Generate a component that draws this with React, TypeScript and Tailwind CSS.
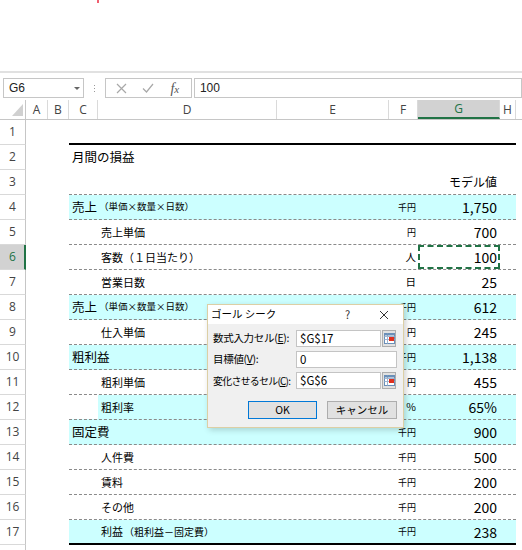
import React from 'react';

type Row = {
  n: number;
  fill?: 'C' | 'D';
  main?: string;
  mainSub?: string;
  indent?: string;
  indentSub?: string;
  unit?: string;
  unitBig?: boolean;
  val?: string;
  head?: string;
  border?: 'dash' | 'blackB' | 'none';
  title?: string;
  sel?: boolean;
  hideNum?: boolean;
};

const rows: Row[] = [
  { n: 1, border: 'blackB' },
  { n: 2, title: '月間の損益', border: 'none' },
  { n: 3, head: 'モデル値', border: 'dash' },
  { n: 4, fill: 'C', main: '売上', mainSub: '（単価×数量×日数）', unit: '千円', val: '1,750', border: 'dash' },
  { n: 5, indent: '売上単価', unit: '円', val: '700', border: 'dash' },
  { n: 6, indent: '客数（１日当たり）', unit: '人', unitBig: true, val: '100', border: 'dash', sel: true },
  { n: 7, indent: '営業日数', unit: '日', unitBig: true, val: '25', border: 'dash' },
  { n: 8, fill: 'C', main: '売上', mainSub: '（単価×数量×日数）', unit: '千円', val: '612', border: 'dash' },
  { n: 9, indent: '仕入単価', unit: '円', val: '245', border: 'dash' },
  { n: 10, fill: 'C', main: '粗利益', unit: '千円', val: '1,138', border: 'dash' },
  { n: 11, indent: '粗利単価', unit: '円', val: '455', border: 'dash' },
  { n: 12, fill: 'D', indent: '粗利率', unit: '%', unitBig: true, val: '65%', border: 'dash' },
  { n: 13, fill: 'C', main: '固定費', unit: '千円', val: '900', border: 'dash' },
  { n: 14, indent: '人件費', unit: '千円', val: '500', border: 'dash' },
  { n: 15, indent: '賃料', unit: '千円', val: '200', border: 'dash' },
  { n: 16, indent: 'その他', unit: '千円', val: '200', border: 'dash' },
  { n: 17, fill: 'C', indent: '利益', indentSub: '（粗利益－固定費）', unit: '千円', val: '238', border: 'blackB' },
  { n: 18, border: 'none', hideNum: true },
];

const cols = [
  { l: 'A', w: 'w-[22px]' },
  { l: 'B', w: 'w-[21px]' },
  { l: 'C', w: 'w-[29px]' },
  { l: 'D', w: 'w-[179px]' },
  { l: 'E', w: 'w-[112px]' },
  { l: 'F', w: 'w-[29px]' },
  { l: 'G', w: 'w-[82px]' },
  { l: 'H', w: 'w-[16px]' },
];

const JP = "font-['Noto_Sans_CJK_JP',sans-serif]";
const UI = "font-['Open_Sans','Liberation_Sans',sans-serif]";

function Picker() {
  return (
    <div className="w-[14px] h-[17px] ml-[1px] box-border border border-[#adadad] bg-[#e1e1e1] flex items-center justify-center">
      <svg width="11" height="11" viewBox="0 0 11 11">
        <rect x="0.5" y="0.5" width="10" height="10" fill="#ffffff" stroke="#6b8fb8" />
        <line x1="0.5" y1="3.5" x2="10.5" y2="3.5" stroke="#9fb6d2" />
        <line x1="0.5" y1="6.5" x2="10.5" y2="6.5" stroke="#9fb6d2" />
        <line x1="3.5" y1="0.5" x2="3.5" y2="10.5" stroke="#9fb6d2" />
        <rect x="0.5" y="0.5" width="10" height="2" fill="#6b8fb8" />
        <rect x="5" y="4" width="5" height="4" fill="#e0301e" />
      </svg>
    </div>
  );
}

function Dialog() {
  return (
    <div className={`absolute left-[207px] top-[304px] w-[197px] h-[124px] box-border border border-[#dccfa5] bg-[#f0f0f0] shadow-[2px_2px_6px_rgba(0,0,0,0.18)] ${JP} text-[11px] text-black leading-none`}>
      <div className="h-[19px] bg-white flex items-center relative">
        <span className="pl-[3px] text-[10.5px]">ゴール シーク</span>
        <span className="absolute left-[137px] top-[4px] text-[11px] text-[#333]">?</span>
        <svg className="absolute left-[171px] top-[5px]" width="10" height="10" viewBox="0 0 10 10">
          <path d="M1 1 L9 9 M9 1 L1 9" stroke="#333" strokeWidth="1" />
        </svg>
      </div>
      <div className="flex flex-col pl-[5px] pt-[6px]">
        <div className="flex items-center h-[17px]">
          <span className="w-[83px] whitespace-nowrap text-[10.5px] tracking-[-0.3px]">数式入力セル(<span className="underline">E</span>):</span>
          <div className="w-[85px] h-[17px] box-border border border-[#c4c4c4] bg-white flex items-center pl-[3px] text-[11.5px]">$G$17</div>
          <Picker />
        </div>
        <div className="flex items-center h-[17px] mt-[4px]">
          <span className="w-[83px] whitespace-nowrap text-[10.5px] tracking-[-0.3px]">目標値(<span className="underline">V</span>):</span>
          <div className="w-[101px] h-[17px] box-border border border-[#c4c4c4] bg-white flex items-center pl-[3px] text-[11.5px]">0</div>
        </div>
        <div className="flex items-center h-[17px] mt-[4px]">
          <span className="w-[83px] whitespace-nowrap text-[10px] tracking-[-0.8px]">変化させるセル(<span className="underline">C</span>):</span>
          <div className="w-[85px] h-[17px] box-border border border-[#c4c4c4] bg-white flex items-center pl-[3px] text-[11.5px]">$G$6</div>
          <Picker />
        </div>
        <div className="flex h-[18px] mt-[12px] pl-[35px] text-[10.5px]">
          <div className="w-[69px] h-[18px] box-border border border-[#0078d7] bg-[#e1e1e1] flex items-center justify-center">OK</div>
          <div className="w-[70px] h-[18px] ml-[10px] box-border border border-[#adadad] bg-[#e1e1e1] flex items-center justify-center">キャンセル</div>
        </div>
      </div>
    </div>
  );
}

function BodyRow({ r }: { r: Row }) {
  const hdrSel = r.sel;
  let border = '';
  if (r.border === 'dash') border = 'border-b border-dashed border-[#8a8a8a]';
  if (r.border === 'blackB') border = 'border-b-2 border-solid border-black';
  const contBg = r.fill ? 'bg-[#ccffff]' : 'bg-white';
  const cBg = r.fill === 'D' ? 'bg-white' : '';
  return (
    <div className="flex h-[25px] shrink-0">
      <div
        className={`w-[26px] h-[25px] box-border border-b border-b-[#d9d9d9] flex items-center justify-center text-[12px] ${UI} ${
          hdrSel ? 'bg-[#d2d2d2] text-[#217346] border-r-2 border-r-[#217346]' : 'bg-white text-[#444] border-r border-r-[#c6c6c6]'
        }`}
      >
        {!r.hideNum && <span className={hdrSel ? 'pl-[1px]' : ''}>{r.n}</span>}
      </div>
      <div className="w-[43px]" />
      <div className={`flex w-[447px] h-[25px] box-border ${border} ${contBg} ${JP} text-black leading-none`}>
        <div className={`w-[29px] flex items-center whitespace-nowrap pl-[3px] ${cBg}`}>
          {r.title && <span className="text-[12.5px]">{r.title}</span>}
          {r.main && <span className="text-[12.5px]">{r.main}</span>}
          {r.mainSub && <span className="text-[9.5px] ml-[2px]">{r.mainSub}</span>}
        </div>
        <div className="w-[291px] flex items-center whitespace-nowrap pl-[3px]">
          {r.indent && <span className="text-[11px]">{r.indent}</span>}
          {r.indentSub && <span className="text-[10px] ml-[1px]">{r.indentSub}</span>}
        </div>
        <div className="w-[29px] flex items-center justify-end pr-[2px]">
          {r.unit && <span className={r.unitBig ? 'text-[10.5px]' : 'text-[9px]'}>{r.unit}</span>}
        </div>
        <div className="w-[82px] relative flex items-center justify-end pr-[3px]">
          {r.head && <span className="text-[12px]">{r.head}</span>}
          {r.val && <span className="text-[14px]">{r.val}</span>}
          {r.sel && <div className="absolute inset-0 border-2 border-dashed border-[#217346]" />}
        </div>
        <div className="w-[16px]" />
      </div>
    </div>
  );
}

export default function App() {
  return (
    <div className="relative w-[522px] h-[550px] overflow-hidden bg-white">
      <div className="h-[71px] relative">
        <div className="absolute left-[97px] top-0 w-[2px] h-[3px] bg-[#f06070]" />
      </div>
      <div className="h-[2px] bg-[#e1e1e1]" />
      {/* formula bar */}
      <div className={`h-[27px] flex items-start pt-[5px] ${UI} text-[12px] text-[#222]`}>
        <div className="ml-[3px] w-[81px] h-[20px] box-border border border-[#c6c6c6] bg-white flex items-center pl-[5px] relative">
          <span className="font-['Liberation_Sans',sans-serif]">G6</span>
          <svg className="absolute left-[70px] top-[8px]" width="6" height="4" viewBox="0 0 6 4">
            <path d="M0 0 H6 L3 3 Z" fill="#666" />
          </svg>
        </div>
        <div className="w-[22px] h-[20px] flex flex-col items-center justify-center gap-[2px]">
          <div className="w-[1px] h-[1px] bg-[#999]" />
          <div className="w-[1px] h-[1px] bg-[#999]" />
          <div className="w-[1px] h-[1px] bg-[#999]" />
        </div>
        <div className="w-[87px] h-[20px] box-border border border-[#c6c6c6] bg-white flex items-center">
          <svg className="ml-[10px]" width="11" height="11" viewBox="0 0 11 11">
            <path d="M1 1 L10 10 M10 1 L1 10" stroke="#a8a8a8" strokeWidth="1.2" />
          </svg>
          <svg className="ml-[15px]" width="12" height="10" viewBox="0 0 12 10">
            <path d="M1 5.5 L4.5 9 L11 1" stroke="#a8a8a8" strokeWidth="1.2" fill="none" />
          </svg>
          <span className="ml-[16px] font-['Liberation_Serif',serif] italic text-[14px] text-[#555]">f<span className="text-[11px]">x</span></span>
        </div>
        <div className="ml-[2px] w-[330px] h-[20px] box-border border border-[#c6c6c6] bg-white flex items-center pl-[5px]">
          <span className="font-['Liberation_Sans',sans-serif]">100</span>
        </div>
      </div>
      {/* column headers */}
      <div className={`flex h-[20px] box-border border-b border-[#c6c6c6] ${UI} text-[12px] text-[#444]`}>
        <div className="w-[26px] h-full box-border border-r border-[#c6c6c6] relative">
          <svg className="absolute left-[12px] top-[4px]" width="11" height="12" viewBox="0 0 11 12">
            <path d="M11 0 L11 12 L0 12 Z" fill="#d0d0d0" />
          </svg>
        </div>
        {cols.map((c) => (
          <div
            key={c.l}
            className={`${c.w} h-full box-border border-r border-[#dadada] flex items-center justify-center ${
              c.l === 'G' ? 'bg-[#d2d2d2] text-[#217346] border-b-2 border-b-[#217346]' : ''
            }`}
          >
            {c.l}
          </div>
        ))}
      </div>
      <div className="flex flex-col">
        {rows.map((r) => (
          <BodyRow key={r.n} r={r} />
        ))}
      </div>
      <Dialog />
    </div>
  );
}
